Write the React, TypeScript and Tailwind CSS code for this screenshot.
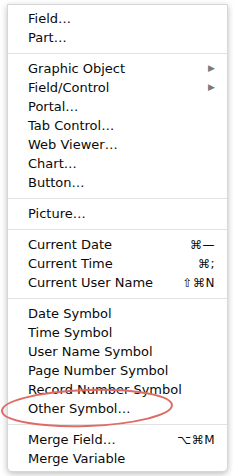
const rows: (string | { label: string; key?: string; sub?: boolean })[] = [
  { label: "Field…" },
  { label: "Part…" },
  "-",
  { label: "Graphic Object", sub: true },
  { label: "Field/Control", sub: true },
  { label: "Portal…" },
  { label: "Tab Control…" },
  { label: "Web Viewer…" },
  { label: "Chart…" },
  { label: "Button…" },
  "-",
  { label: "Picture…" },
  "-",
  { label: "Current Date", key: "⌘—" },
  { label: "Current Time", key: "⌘;" },
  { label: "Current User Name", key: "⇧⌘N" },
  "-",
  { label: "Date Symbol" },
  { label: "Time Symbol" },
  { label: "User Name Symbol" },
  { label: "Page Number Symbol" },
  { label: "Record Number Symbol" },
  { label: "Other Symbol…" },
  "-",
  { label: "Merge Field…", key: "⌥⌘M" },
  { label: "Merge Variable" },
];

export default function App() {
  return (
    <div className="relative w-[233px] h-[476px] bg-white overflow-hidden" style={{ fontFamily: '"DejaVu Sans", "Liberation Sans", sans-serif' }}>
      <div className="ml-[7px] mt-[4px] w-[221px] bg-white border border-[#d6d6d6] rounded-b-[5px] shadow-[0_2px_6px_rgba(0,0,0,0.25)] pt-[4px] pb-[3px]">
        {rows.map((r, i) => {
          if (r === "-") {
            return (
              <div key={i} className="h-[12px] flex items-center">
                <div className="h-px w-full bg-[#e2e2e2]" />
              </div>
            );
          }
          if (typeof r === "string") return null;
          return (
            <div key={i} className="h-[19px] flex items-center pl-[20px] pr-[12px] text-[13px] text-[#0a0a0a] leading-none">
              <span className="flex-1">{r.label}</span>
              {r.key && <span className="text-[12px] tracking-[0.5px]">{r.key}</span>}
              {r.sub && <span className="text-[9px] text-[#7a7a7a]">▶</span>}
            </div>
          );
        })}
      </div>
      {/* red annotation ellipse */}
      <svg className="absolute left-0 top-[386px] pointer-events-none" width="180" height="46" viewBox="0 0 180 46">
        <ellipse cx="87" cy="22" rx="85" ry="18" fill="none" stroke="#de6b66" strokeWidth="2" transform="rotate(-2 87 22)" />
      </svg>
    </div>
  );
}
